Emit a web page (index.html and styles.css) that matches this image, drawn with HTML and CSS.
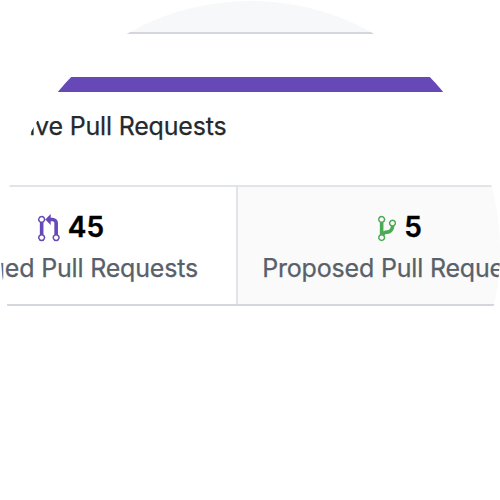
FILE: index.html
```
<!DOCTYPE html>
<html lang="en">
<head>
<meta charset="utf-8">
<title>Pull requests</title>
<link rel="stylesheet" href="styles.css">
</head>
<body>
<main class="lens">
  <header class="panel-head"></header>
  <section class="summary">
    <div class="bar"></div>
    <p class="caption">Active Pull Requests</p>
  </section>
  <section class="stats">
    <div class="stat">
      <div class="count">
        <svg class="icon merged" viewBox="0 0 12 16"><path fill-rule="evenodd" d="M11 11.28V5c-.03-.78-.34-1.47-.94-2.06C9.46 2.35 8.78 2.03 8 2H7V0L4 3l3 3V4h1c.27.02.48.11.69.31.21.2.3.42.31.69v6.28A1.993 1.993 0 0 0 10 15a1.993 1.993 0 0 0 1-3.72zm-1 2.92c-.66 0-1.2-.55-1.2-1.2 0-.65.55-1.2 1.2-1.2.65 0 1.2.55 1.2 1.2 0 .65-.55 1.2-1.2 1.2zM4 3c0-1.11-.89-2-2-2a1.993 1.993 0 0 0-1 3.72v6.56A1.993 1.993 0 0 0 2 15a1.993 1.993 0 0 0 1-3.72V4.72c.59-.34 1-.98 1-1.72zm-.8 10c0 .66-.55 1.2-1.2 1.2-.65 0-1.2-.55-1.2-1.2 0-.65.55-1.2 1.2-1.2.65 0 1.2.55 1.2 1.2zM2 4.2C1.34 4.2.8 3.65.8 3c0-.65.55-1.2 1.2-1.2.65 0 1.2.55 1.2 1.2 0 .65-.55 1.2-1.2 1.2z"/></svg>
        <span>45</span>
      </div>
      <div class="label">Merged Pull Requests</div>
    </div>
    <div class="stat proposed">
      <div class="count">
        <svg class="icon branch" viewBox="0 0 10 16"><path fill-rule="evenodd" d="M10 5c0-1.11-.89-2-2-2a1.993 1.993 0 0 0-1 3.72v.3c-.02.52-.23.98-.63 1.38-.4.4-.86.61-1.38.63-.83.02-1.48.16-2 .45V4.72a1.993 1.993 0 0 0-1-3.72C.88 1 0 1.89 0 3a2 2 0 0 0 1 1.72v6.56c-.59.35-1 .99-1 1.72 0 1.11.89 2 2 2 1.11 0 2-.89 2-2 0-.53-.2-1-.53-1.36.09-.06.48-.41.59-.47.25-.11.56-.17.94-.17 1.05-.05 1.95-.45 2.75-1.25S8.95 7.77 9 6.73h-.02C9.59 6.37 10 5.73 10 5zM2 1.8c.66 0 1.2.55 1.2 1.2 0 .65-.55 1.2-1.2 1.2C1.35 4.2.8 3.65.8 3c0-.65.55-1.2 1.2-1.2zm0 12.41c-.66 0-1.2-.55-1.2-1.2 0-.65.55-1.2 1.2-1.2.65 0 1.2.55 1.2 1.2 0 .65-.55 1.2-1.2 1.2zm6-8c-.66 0-1.2-.55-1.2-1.2 0-.65.55-1.2 1.2-1.2.65 0 1.2.55 1.2 1.2 0 .65-.55 1.2-1.2 1.2z"/></svg>
        <span>5</span>
      </div>
      <div class="label">Proposed Pull Requests</div>
    </div>
  </section>
</main>
</body>
</html>
```
FILE: styles.css
```
* { box-sizing: border-box; }
body {
  margin: 0;
  background: #fff;
  font-family: Inter, "Liberation Sans", sans-serif;
}
.lens {
  width: 500px;
  height: 500px;
  overflow: hidden;
  clip-path: circle(249.5px at 250.5px 250.5px);
}
.panel-head {
  height: 34px;
  background: #f6f8fa;
  border-bottom: 2px solid #d3d6dd;
}
.summary {
  height: 151px;
  padding-top: 43px;
}
.bar {
  height: 15px;
  background: #6748b7;
}
.caption {
  width: 226.5px;
  margin: 17px 0 0;
  display: flex;
  justify-content: flex-end;
  font-size: 25px;
  letter-spacing: -0.18px;
  line-height: 34px;
  white-space: nowrap;
  color: #24292e;
  -webkit-text-stroke: 0.25px currentColor;
}
.stats {
  display: grid;
  grid-template-columns: 332px 324px;
  width: 656px;
  height: 121px;
  margin-left: -94px;
  border-top: 2px solid #e1e4e8;
  border-bottom: 2px solid #d3d6dd;
}
.stat {
  display: flex;
  flex-direction: column;
  align-items: center;
  padding-top: 24px;
  border-right: 2px solid #e1e4e8;
}
.proposed { background: #fafafb; border-right: 0; }
.count {
  display: flex;
  align-items: center;
  gap: 8px;
  height: 34px;
  font-size: 28px;
  font-weight: 600;
  line-height: 34px;
  color: #000;
}
.count span {
  padding-bottom: 2px;
  -webkit-text-stroke: 0.4px currentColor;
}
.icon { height: 29px; }
.merged { width: 21.8px; fill: #6748b7; }
.branch { width: 18.2px; fill: #4caa54; }
.label {
  margin-top: 6px;
  font-size: 25px;
  letter-spacing: -0.18px;
  line-height: 34px;
  white-space: nowrap;
  color: #586069;
  -webkit-text-stroke: 0.25px currentColor;
}
```
